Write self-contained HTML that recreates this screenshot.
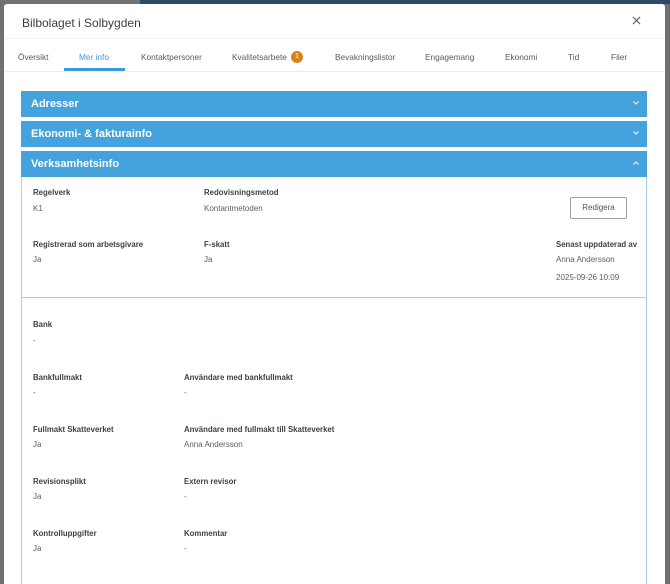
<!DOCTYPE html>
<html><head><meta charset="utf-8"><style>
*{margin:0;padding:0;box-sizing:border-box}
body{width:670px;height:579px;overflow:hidden;background:#6f7275;font-family:"Liberation Sans",sans-serif;position:relative}
.topbar{position:absolute;left:140px;top:0;width:530px;height:4px;background:#2a4a66}
.modal{position:absolute;left:4px;top:4px;width:661px;height:580px;background:#fff;border-radius:3px 3px 0 0;overflow:hidden}
.title{position:absolute;left:18px;top:12px;font-size:12px;color:#3a3f45}
.close{position:absolute;left:628px;top:12px}
.hsep{position:absolute;left:0;top:34px;width:661px;height:1px;background:#eef0f2}
.tabs{position:absolute;top:47px;font-size:8.3px;color:#555b62}
.tabs span{position:absolute;white-space:nowrap;line-height:12px}
.uline{position:absolute;left:60px;top:64px;width:61px;height:3px;background:#3d9ad9}
.tsep{position:absolute;left:0;top:67px;width:661px;height:1px;background:#eceef0}
.badge{position:absolute;left:59px;top:0;width:12px;height:12px;border-radius:6px;background:#d4841f;color:#fff;font-size:7px;text-align:center;line-height:12px}
.acc{position:absolute;left:17px;width:626px;height:26px;background:#44a2dc;color:#fff;font-weight:bold;font-size:11px;padding:7px 0 0 10px}
.acc svg{position:absolute;right:8px;top:10px}
.panel{position:absolute;left:17px;top:173px;width:626px;height:420px;border:1px solid #9fd0f0;border-top:none}
.sep2{position:absolute;left:0;top:120px;width:624px;height:1px;background:#9fd0f0}
.l{position:absolute;font-size:7.8px;font-weight:bold;color:#3c4147;white-space:nowrap}
.v{position:absolute;font-size:8px;color:#5a6067;white-space:nowrap}
.btn{position:absolute;left:548px;top:20px;width:57px;height:22px;border:1px solid #9aa0a6;border-radius:2px;font-size:8px;color:#555;text-align:center;line-height:20px}
</style></head><body>
<div class="topbar"></div>
<div class="modal">
<div class="title">Bilbolaget i Solbygden</div>
<svg class="close" width="9" height="9" viewBox="0 0 10 10"><path d="M1 1L9 9M9 1L1 9" stroke="#555" stroke-width="1.2"/></svg>
<div class="hsep"></div>
<div class="tabs">
<span style="left:14px">Översikt</span>
<span style="left:75px;color:#3d9ad9">Mer info</span>
<span style="left:137px">Kontaktpersoner</span>
<span style="left:228px;width:80px">Kvalitetsarbete<span class="badge">1</span></span>
<span style="left:331px">Bevakningslistor</span>
<span style="left:421px">Engagemang</span>
<span style="left:501px">Ekonomi</span>
<span style="left:564px">Tid</span>
<span style="left:607px">Filer</span>
</div>
<div class="uline"></div><div class="tsep"></div>
<div class="acc" style="top:87px">Adresser<svg width="6" height="4"><path d="M0.5 0.5L3 3L5.5 0.5" stroke="#fff" fill="none"/></svg></div>
<div class="acc" style="top:117px">Ekonomi- &amp; fakturainfo<svg width="6" height="4"><path d="M0.5 0.5L3 3L5.5 0.5" stroke="#fff" fill="none"/></svg></div>
<div class="acc" style="top:147px">Verksamhetsinfo<svg width="6" height="4"><path d="M0.5 3.5L3 1L5.5 3.5" stroke="#fff" fill="none"/></svg></div>
<div class="panel">
<div class="l" style="left:11px;top:11px">Regelverk</div><div class="v" style="left:11px;top:27px">K1</div>
<div class="l" style="left:182px;top:11px">Redovisningsmetod</div><div class="v" style="left:182px;top:27px">Kontantmetoden</div>
<div class="btn">Redigera</div>
<div class="l" style="left:11px;top:63px">Registrerad som arbetsgivare</div><div class="v" style="left:11px;top:78px">Ja</div>
<div class="l" style="left:182px;top:63px">F-skatt</div><div class="v" style="left:182px;top:78px">Ja</div>
<div class="l" style="left:534px;top:63px">Senast uppdaterad av</div><div class="v" style="left:534px;top:78px">Anna Andersson</div>
<div class="v" style="left:534px;top:96px">2025-09-26 10:09</div>
<div class="sep2"></div>
<div class="l" style="left:11px;top:143px">Bank</div><div class="v" style="left:11px;top:159px">-</div>
<div class="l" style="left:11px;top:196px">Bankfullmakt</div><div class="v" style="left:11px;top:211px">-</div>
<div class="l" style="left:162px;top:196px">Användare med bankfullmakt</div><div class="v" style="left:162px;top:211px">-</div>
<div class="l" style="left:11px;top:248px">Fullmakt Skatteverket</div><div class="v" style="left:11px;top:263px">Ja</div>
<div class="l" style="left:162px;top:248px">Användare med fullmakt till Skatteverket</div><div class="v" style="left:162px;top:263px">Anna Andersson</div>
<div class="l" style="left:11px;top:300px">Revisionsplikt</div><div class="v" style="left:11px;top:315px">Ja</div>
<div class="l" style="left:162px;top:300px">Extern revisor</div><div class="v" style="left:162px;top:315px">-</div>
<div class="l" style="left:11px;top:352px">Kontrolluppgifter</div><div class="v" style="left:11px;top:367px">Ja</div>
<div class="l" style="left:162px;top:352px">Kommentar</div><div class="v" style="left:162px;top:367px">-</div>
</div>
</div>
</body></html>
